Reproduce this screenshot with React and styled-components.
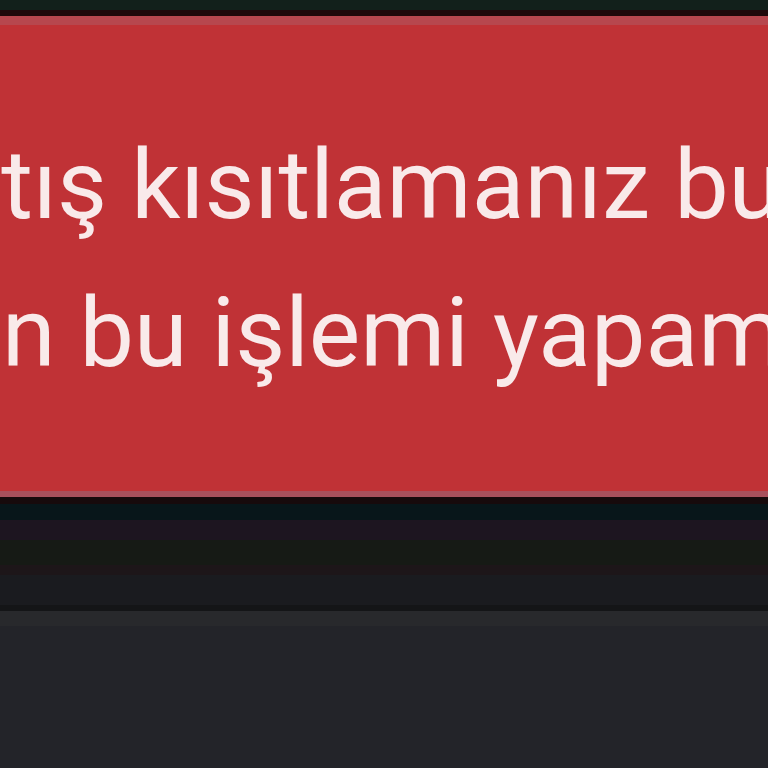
import React from 'react';
import styled, { createGlobalStyle } from 'styled-components';

const GlobalStyle = createGlobalStyle`
  html, body {
    margin: 0;
    padding: 0;
    background: #232429;
    overflow: hidden;
  }
`;

const Page = styled.div`
  width: 768px;
  height: 768px;
  overflow: hidden;
  display: flex;
  flex-direction: column;
  background: #232429;
`;

const TopBar = styled.div`
  height: 10px;
  background: #12201b;
  border-bottom: 6px solid #1f080a;
`;

const Alert = styled.div`
  background: #c03236;
  border-top: 9px solid #b7474e;
  border-bottom: 6px solid #a8505c;
  padding: 86px 0 84px;
  color: #f9eaea;
  font-family: Roboto, 'Liberation Sans', sans-serif;
  font-size: 97px;
  font-weight: 400;
  line-height: 148px;
  overflow: hidden;
`;

const Line = styled.div`
  white-space: nowrap;
  margin-left: ${props => props.shift}px;
`;

const Strip = styled.div`
  height: ${props => props.size}px;
  background: ${props => props.color};
  flex-shrink: 0;
`;

const Footer = styled.div`
  flex: 1;
  background: #232429;
`;

const strips = [
  { size: 7, color: '#170a0c' },
  { size: 16, color: '#08161a' },
  { size: 20, color: '#1d1520' },
  { size: 25, color: '#161a15' },
  { size: 10, color: '#1d1619' },
  { size: 30, color: '#1a1b1f' },
  { size: 6, color: '#141517' },
  { size: 15, color: '#28292c' },
];

const App = () => (
  <Page>
    <GlobalStyle />
    <TopBar />
    <Alert>
      <Line shift={-109}>Satış kısıtlamanız bulunduğundan</Line>
      <Line shift={-96}>için bu işlemi yapamazsınız.</Line>
    </Alert>
    {strips.map((s, i) => (
      <Strip key={i} size={s.size} color={s.color} />
    ))}
    <Footer />
  </Page>
);

export default App;
